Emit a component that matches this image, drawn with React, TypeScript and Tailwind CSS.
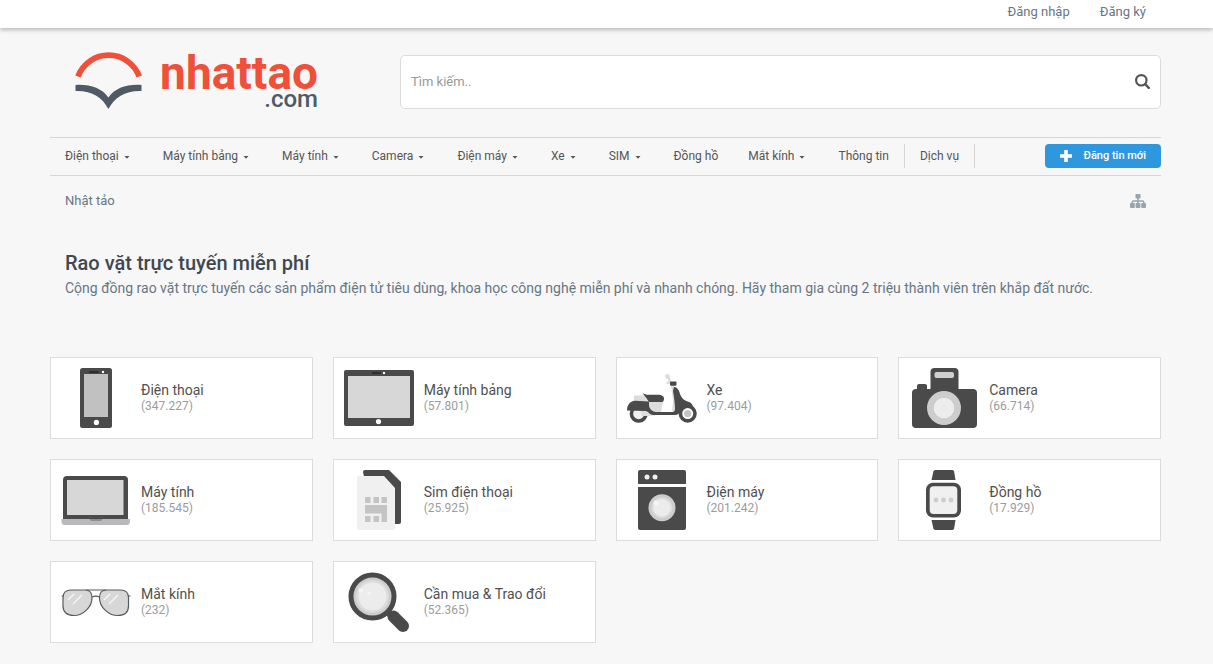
import type { ReactNode } from 'react'

type NavItem = { label: string; hasMenu?: boolean; divided?: boolean }

type Category = { name: string; count: string; icon: ReactNode }

const navItems: NavItem[] = [
  { label: 'Điện thoại', hasMenu: true },
  { label: 'Máy tính bảng', hasMenu: true },
  { label: 'Máy tính', hasMenu: true },
  { label: 'Camera', hasMenu: true },
  { label: 'Điện máy', hasMenu: true },
  { label: 'Xe', hasMenu: true },
  { label: 'SIM', hasMenu: true },
  { label: 'Đồng hồ' },
  { label: 'Mắt kính', hasMenu: true },
  { label: 'Thông tin', divided: true },
  { label: 'Dịch vụ', divided: true },
]

function Icon({ children }: { children: ReactNode }) {
  return (
    <svg viewBox="0 0 70 60" className="h-[60px] w-[70px] shrink-0" fill="#4a4a4a" aria-hidden="true">
      {children}
    </svg>
  )
}

function PhoneIcon() {
  return (
    <Icon>
      <rect x="19" width="32" height="60" rx="2.5" />
      <rect x="23" y="6" width="24" height="43" fill="#c1c1c1" />
      <rect x="28" y="3" width="9.5" height="2" rx="1" fill="#2e2e2e" />
      <circle cx="42" cy="4" r="1.2" fill="#fff" />
      <circle cx="35.4" cy="54.4" r="2.6" fill="#fff" />
    </Icon>
  )
}

function TabletIcon() {
  return (
    <Icon>
      <rect y="2" width="70" height="56" rx="2" />
      <rect x="4" y="8" width="62" height="42" fill="#d7d7d7" />
      <rect x="28" y="4" width="9" height="2" rx="1" fill="#2e2e2e" />
      <circle cx="40" cy="5" r="1.2" fill="#fff" />
      <circle cx="34.5" cy="53.6" r="2.6" fill="#fff" />
    </Icon>
  )
}

function ScooterIcon() {
  return (
    <Icon>
      <path d="M7 27.500h10l4 6h15l-2 11H15L7 34z" fill="#dcdcdc" />
      <path d="M14 41l12 1 2 6H18z" fill="#ececec" />
      <path d="M44 17l5 2 2 8 1 16h-7l1-10z" fill="#dcdcdc" />
      <circle cx="40.5" cy="8.5" r="2.4" fill="#dcdcdc" />
      <path d="M41 8.500l2.500 6-4 .5" fill="none" stroke="#dcdcdc" strokeWidth="2.400" />
      <circle cx="11.700" cy="45.700" r="7.300" fill="#f0f0f0" stroke="#4a4a4a" strokeWidth="3.600" />
      <path d="M12 40h10l4 5-3 3H15z" fill="#dedede" />
      <circle cx="60.700" cy="45.600" r="7.300" fill="#fff" stroke="#4a4a4a" strokeWidth="3.600" />
      <circle cx="60.700" cy="45.600" r="3.600" fill="#c4c4c4" />
      <path d="M0 42.500C0 36 4 33 8 32.700L22 33.500v3.500c0 4 4 7 7 7h16c2 0 3-1 3-3 0-5-1-12-2-18l1-4c3 0 5 3 6 7 2 5 5 7 9 8 3 1 4 4 5 7-5-2-9-2-12 1-3 3-4 5-7 5H26c-3 0-4-3-7-4z" />
      <path d="M15.500 25.200L20 26.800h10c4-.2 7 1 7 3.700 0 2-.7 3.500-2 3.500H22l-3.500-5z" />
      <rect x="43" y="13.500" width="6.500" height="4.300" rx="1" />
    </Icon>
  )
}

function CameraIcon() {
  return (
    <Icon>
      <rect x="3" y="21" width="65" height="39" rx="4" />
      <rect x="8" y="16" width="10" height="10" rx="2" />
      <rect x="21.500" width="28" height="30" rx="4" />
      <rect x="25.500" y="4" width="19.500" height="6" rx="2" fill="#cfcfcf" />
      <circle cx="35" cy="40" r="17" fill="#cdcdcd" />
      <circle cx="35" cy="40" r="10.300" fill="#ececec" />
    </Icon>
  )
}

function LaptopIcon() {
  return (
    <Icon>
      <path d="M2 50V10a4 4 0 0 1 4-4h57a4 4 0 0 1 4 4v40z" />
      <rect x="6" y="10" width="56.500" height="35" fill="#d7d7d7" />
      <path d="M.5 49h68.500v2.500a3.500 3.500 0 0 1-3.500 3.500H4a3.500 3.500 0 0 1-3.500-3.500z" fill="#b9b8bd" />
      <path d="M28.500 49h13l-1.500 2h-10z" fill="#8c8b90" />
    </Icon>
  )
}

function SimIcon() {
  return (
    <Icon>
      <path d="M19 2a2 2 0 0 1 2-2h24l12 12v40a2 2 0 0 1-2 2H30z" />
      <path d="M13 8a2 2 0 0 1 2-2h25l11 12v40a2 2 0 0 1-2 2H15a2 2 0 0 1-2-2z" fill="#f0f0f0" />
      <g fill="#c4c4c4">
        <rect x="21" y="27" width="5.500" height="6" />
        <rect x="29.500" y="27" width="5.500" height="6" />
        <rect x="37.500" y="27" width="5.500" height="6" />
        <path d="M21 35h22v17h-5.500v-8.500H21z" />
        <rect x="21" y="46" width="5.500" height="6" />
        <rect x="29.500" y="46" width="5.500" height="6" />
      </g>
    </Icon>
  )
}

function WasherIcon() {
  return (
    <Icon>
      <path d="M11 14V2a2 2 0 0 1 2-2h44a2 2 0 0 1 2 2v12z" />
      <path d="M11 17h48v41a2 2 0 0 1-2 2H13a2 2 0 0 1-2-2z" />
      <circle cx="20" cy="7" r="2.500" fill="#f0f0f0" />
      <circle cx="28" cy="7" r="2.500" fill="#f0f0f0" />
      <circle cx="35" cy="37.700" r="13.500" fill="#cdcdcd" />
      <circle cx="35" cy="37.700" r="10.500" fill="#dcdcdc" />
      <circle cx="35" cy="37.700" r="8.700" fill="#ececec" />
      <circle cx="29" cy="33" r="2.500" fill="#f6f6f6" />
    </Icon>
  )
}

function WatchIcon() {
  return (
    <Icon>
      <path d="M26 0h17.500l1.500 1 1.500 9h-24L24.500 1z" />
      <path d="M22.500 50h24L45 59l-1.500 1H26l-1.500-1z" />
      <rect x="17" y="12.700" width="35" height="34.800" rx="7" />
      <rect x="20.700" y="16.300" width="27.600" height="27.600" rx="4" fill="#f0f0f0" />
      <g fill="#cdcdcd">
        <circle cx="27" cy="30" r="2.400" />
        <circle cx="34.500" cy="30" r="2.400" />
        <circle cx="42" cy="30" r="2.400" />
      </g>
    </Icon>
  )
}

function GlassesIcon() {
  return (
    <Icon>
      <g fill="#d7d7d7" stroke="#5a5a5a" strokeWidth="1.200">
        <path d="M2 25.500c0-5 3-7.500 8-7.500h14.500c4 0 6.500 3 6.500 8C31 35 22 43.500 13 43.500c-7 0-11-3.500-11-9.500z" />
        <path d="M67.500 25.500c0-5-3-7.500-8-7.500H45c-4 0-6.500 3-6.500 8C38.500 35 47.500 43.500 56.500 43.500c7 0 11-3.500 11-9.500z" />
        <path d="M25 18h20M31 25c2-1 5.500-1 7.500 0M.5 24h2M67 24h2.500" fill="none" />
      </g>
      <path d="M7 28l6-6M12 32l9-9M43 28l6-6M48 32l9-9" stroke="#f7f7f7" strokeWidth="1.300" />
    </Icon>
  )
}

function MagnifierIcon() {
  return (
    <Icon>
      <path d="M43 41l6 6" stroke="#4a4a4a" strokeWidth="4" />
      <path d="M49.500 44.500l9.500 9.500" stroke="#4a4a4a" strokeWidth="12" strokeLinecap="round" />
      <circle cx="28.500" cy="24.500" r="21.500" fill="#cdcdcd" stroke="#4a4a4a" strokeWidth="5" />
      <circle cx="28.500" cy="24.500" r="16.500" fill="#dcdcdc" />
      <circle cx="28.500" cy="24.500" r="14" fill="#ececec" />
      <circle cx="17" cy="18.500" r="2.300" fill="#f6f6f6" />
      <circle cx="25" cy="21.500" r="1.500" fill="#f6f6f6" />
    </Icon>
  )
}

const categories: Category[] = [
  { name: 'Điện thoại', count: '347.227', icon: <PhoneIcon /> },
  { name: 'Máy tính bảng', count: '57.801', icon: <TabletIcon /> },
  { name: 'Xe', count: '97.404', icon: <ScooterIcon /> },
  { name: 'Camera', count: '66.714', icon: <CameraIcon /> },
  { name: 'Máy tính', count: '185.545', icon: <LaptopIcon /> },
  { name: 'Sim điện thoại', count: '25.925', icon: <SimIcon /> },
  { name: 'Điện máy', count: '201.242', icon: <WasherIcon /> },
  { name: 'Đồng hồ', count: '17.929', icon: <WatchIcon /> },
  { name: 'Mắt kính', count: '232', icon: <GlassesIcon /> },
  { name: 'Cần mua & Trao đổi', count: '52.365', icon: <MagnifierIcon /> },
]

function TopBar() {
  return (
    <div className="flex h-7 items-start justify-end gap-[30px] bg-white pr-[67px] pt-0.5 text-[13px] leading-5 text-[#687684] shadow-[0_2px_4px_rgba(0,0,0,0.25)]">
      <a href="#login">Đăng nhập</a>
      <a href="#register">Đăng ký</a>
    </div>
  )
}

function Logo() {
  return (
    <a href="#home" className="flex w-[350px] shrink-0 items-start pl-[25px]" aria-label="nhattao.com">
      <svg viewBox="0 0 67 58" className="h-[58px] w-[67px]" aria-hidden="true">
        <path d="M3 25.500A32.700 32.700 0 0 1 64.300 25.500" fill="none" stroke="#f0503a" strokeWidth="5.800" />
        <path d="M.5 34C14 33 27 37 33.400 46.500 40 37 52 33 66.500 34v6C50 39.500 40 46 33.400 58 27 46 17 39.500.5 40z" fill="#505a64" />
      </svg>
      <span className="flex w-[176px] flex-col items-end">
        <span className="text-[46px] font-bold leading-[44px] text-[#f0503a]">nhattao</span>
        <span className="-mt-1 text-2xl font-medium leading-4 text-[#505a64]">.com</span>
      </span>
    </a>
  )
}

function SearchBox() {
  return (
    <form
      role="search"
      onSubmit={(e) => e.preventDefault()}
      className="flex h-[54px] min-w-0 flex-1 items-center rounded-[5px] border border-[#dcdcdc] bg-white pb-0.5"
    >
      <input
        type="search"
        aria-label="Tìm kiếm"
        placeholder="Tìm kiếm.."
        className="h-full min-w-0 flex-1 bg-transparent px-2.5 text-[13px] text-[#4a4a4a] outline-none placeholder:text-[#999]"
      />
      <button type="submit" aria-label="Tìm" className="px-2.5">
        <svg viewBox="0 0 15 15" className="h-[15px] w-[15px]" fill="none" stroke="#555" aria-hidden="true">
          <circle cx="6.300" cy="6.300" r="5.200" strokeWidth="2.200" />
          <path d="M10.200 10.200l3.600 3.600" strokeWidth="2.400" strokeLinecap="round" />
        </svg>
      </button>
    </form>
  )
}

function NavBar() {
  return (
    <nav className="flex h-[39px] items-start justify-between border-y border-[#d6d6d6] pt-1.5">
      <ul className="flex">
        {navItems.map((item) => (
          <li key={item.label} className={item.divided ? 'border-r border-[#d6d6d6]' : ''}>
            <a href="#category" className="flex items-center whitespace-nowrap px-[15px] text-xs leading-6 text-[#555]">
              {item.label}
              {item.hasMenu && (
                <svg viewBox="0 0 6 3" className="ml-[5px] mr-[3px] mt-0.5 h-[3px] w-1.5" fill="#555" aria-hidden="true">
                  <path d="M.5 0h5L3 2.800z" />
                </svg>
              )}
            </a>
          </li>
        ))}
      </ul>
      <button
        type="button"
        className="flex h-6 w-[116px] shrink-0 items-center justify-end gap-3 rounded-sm bg-[#2f97de] pr-[15px] text-[11px] font-medium leading-6 text-white"
      >
        <svg viewBox="0 0 12 12" className="h-3 w-3" fill="#fff" aria-hidden="true">
          <path d="M4.200 0h3.600v4.200H12v3.600H7.800V12H4.200V7.800H0V4.200h4.200z" />
        </svg>
        Đăng tin mới
      </button>
    </nav>
  )
}

function Breadcrumb() {
  return (
    <div className="flex h-[50px] items-center justify-between px-[15px] text-[13px] text-[#687684]">
      <a href="#home">Nhật tảo</a>
      <a href="#sitemap" aria-label="Sơ đồ diễn đàn">
        <svg viewBox="0 0 16 14" className="h-3.5 w-4" fill="#98a5ae" aria-hidden="true">
          <rect x="5.500" y="0" width="5" height="4.500" rx="0.800" />
          <rect x="0" y="9" width="4.800" height="5" rx="0.800" />
          <rect x="5.600" y="9" width="4.800" height="5" rx="0.800" />
          <rect x="11.200" y="9" width="4.800" height="5" rx="0.800" />
          <path d="M8 4v6M2.300 10V8q0-1 1-1h9.400q1 0 1 1v2" fill="none" stroke="#98a5ae" strokeWidth="1.500" />
        </svg>
      </a>
    </div>
  )
}

function CategoryCard({ category }: { category: Category }) {
  return (
    <a href="#category" className="flex h-[82px] items-center gap-2.5 border border-[#dcdcdc] bg-white px-2.5">
      {category.icon}
      <span className="flex flex-col">
        <span className="text-sm leading-4 text-[#505050]">{category.name}</span>
        <span className="text-xs leading-4 text-[#9c9c9c]">({category.count})</span>
      </span>
    </a>
  )
}

export default function App() {
  return (
    <div className="min-h-screen bg-[#f7f7f7] font-[Roboto,sans-serif]">
      <TopBar />
      <div className="pb-[21px] pl-[50px] pr-[52px]">
        <header className="flex items-start pb-7 pt-[27px]">
          <div className="-mt-1">
            <Logo />
          </div>
          <SearchBox />
        </header>
        <NavBar />
        <Breadcrumb />
        <main>
          <div className="px-[15px] pb-[57px] pt-6">
            <h1 className="text-xl font-medium leading-[26px] text-[#3f4850]">Rao vặt trực tuyến miễn phí</h1>
            <p className="text-sm leading-6 text-[#687684]">
              Cộng đồng rao vặt trực tuyến các sản phẩm điện tử tiêu dùng, khoa học công nghệ miễn phí và nhanh chóng. Hãy
              tham gia cùng 2 triệu thành viên trên khắp đất nước.
            </p>
          </div>
          <div className="grid grid-cols-4 gap-5">
            {categories.map((category) => (
              <CategoryCard key={category.name} category={category} />
            ))}
          </div>
        </main>
      </div>
    </div>
  )
}
